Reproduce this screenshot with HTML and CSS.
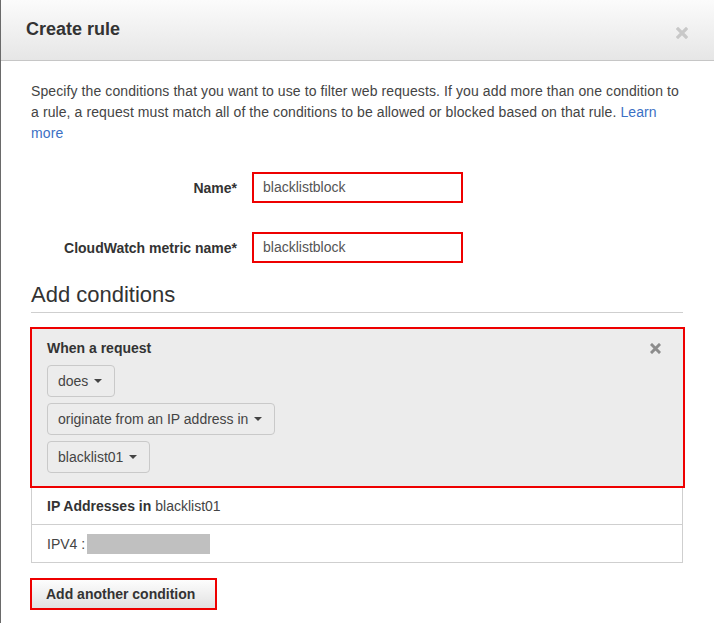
FILE: index.html
```html
<!DOCTYPE html>
<html lang="en">
<head>
<meta charset="utf-8">
<title>Create rule</title>
<link rel="stylesheet" href="styles.css">
</head>
<body>
<div class="modal">
  <div class="modal-header">
    <h1 class="modal-title">Create rule</h1>
    <span class="close-x">
      <svg width="12" height="12" viewBox="0 0 12 12"><path d="M2 2 L10 10 M10 2 L2 10" stroke="#c8c8c8" stroke-width="3.2" stroke-linecap="square"/></svg>
    </span>
  </div>
  <div class="modal-body">
    <p class="intro">Specify the conditions that you want to use to filter web requests. If you add more than one condition to a rule, a request must match all of the conditions to be allowed or blocked based on that rule. <a href="#" class="link">Learn more</a></p>

    <div class="form-row">
      <label class="form-label">Name*</label>
      <div class="field">blacklistblock</div>
    </div>
    <div class="form-row">
      <label class="form-label">CloudWatch metric name*</label>
      <div class="field">blacklistblock</div>
    </div>

    <h2 class="section-title">Add conditions</h2>

    <div class="condition">
      <div class="condition-head">
        <span class="condition-title">When a request</span>
        <span class="condition-close">
          <svg width="11" height="11" viewBox="0 0 11 11"><path d="M2 2 L9 9 M9 2 L2 9" stroke="#8c8c8c" stroke-width="3" stroke-linecap="square"/></svg>
        </span>
      </div>
      <div class="dd-list">
        <button class="dd">does <span class="caret"></span></button>
        <button class="dd">originate from an IP address in <span class="caret"></span></button>
        <button class="dd">blacklist01 <span class="caret"></span></button>
      </div>
    </div>

    <div class="ip-table">
      <div class="ip-row"><b>IP Addresses in</b> blacklist01</div>
      <div class="ip-row">IPV4 : <span class="redacted"></span></div>
    </div>

    <button class="add-btn">Add another condition</button>
  </div>
</div>
</body>
</html>
```

FILE: styles.css
```css
* { box-sizing: border-box; }
html, body { margin: 0; padding: 0; background: #fff; }
body {
  font-family: "Liberation Sans", Arial, sans-serif;
  font-size: 14px;
  color: #444;
  width: 714px;
  height: 623px;
  overflow: hidden;
}
.modal {
  border-left: 1px solid #6a6a6a;
  height: 623px;
}
.modal-header {
  height: 61px;
  border-bottom: 1px solid #c6c6c6;
  background: linear-gradient(to bottom, #fbfbfb 0%, #e6e6e6 100%);
  display: flex;
  align-items: center;
  justify-content: space-between;
  padding: 0 26px 0 25px;
}
.modal-title {
  margin: 0;
  font-size: 18px;
  font-weight: bold;
  color: #333;
  line-height: 20px;
  position: relative;
  top: -1px;
}
.close-x { display: flex; margin-top: 6px; }
.modal-body {
  padding: 20px 31px 0 30px;
}
.intro {
  margin: 0;
  line-height: 21px;
  color: #444;
  letter-spacing: 0.1px;
}
.link { color: #3b70c4; text-decoration: none; }
.form-row {
  display: grid;
  grid-template-columns: 206px 211px;
  column-gap: 15px;
  align-items: center;
  margin-top: 28px;
}
.form-row + .form-row { margin-top: 29px; }
.form-label {
  text-align: right;
  font-weight: bold;
  color: #333;
}
.field {
  height: 31px;
  border: 2px solid #ee0000;
  padding: 0 9px;
  line-height: 27px;
  color: #555;
}
.section-title {
  margin: 17px 0 0;
  font-size: 22px;
  font-weight: normal;
  color: #333;
  line-height: 30px;
  padding-bottom: 2px;
  border-bottom: 1px solid #cfcfcf;
}
.condition {
  margin: 14px -2px 0 -1px;
  border: 2px solid #ee0000;
  background: #ececec;
  padding: 9px 15px 13px 15px;
}
.condition-head {
  display: flex;
  justify-content: space-between;
  align-items: center;
  line-height: 20px;
}
.condition-title { font-weight: bold; color: #333; }
.condition-close { display: flex; margin-right: 7px; }
.dd-list {
  display: flex;
  flex-direction: column;
  align-items: flex-start;
  gap: 6px;
  margin-top: 7px;
}
.dd {
  font-family: inherit;
  font-size: 14px;
  color: #444;
  height: 32px;
  padding: 0 12px 0 10px;
  border: 1px solid #c9c9c9;
  border-radius: 4px;
  background: #ececec;
  display: flex;
  align-items: center;
  gap: 6px;
}
.caret {
  width: 0;
  height: 0;
  border-left: 4px solid transparent;
  border-right: 4px solid transparent;
  border-top: 4px solid #444;
}
.ip-table {
  border: 1px solid #cfcfcf;
  border-top: none;
}
.ip-row {
  padding: 8px 15px;
  line-height: 20px;
  color: #444;
  display: flex;
  align-items: center;
}
.ip-row b { color: #333; margin-right: 4px; }
.ip-row + .ip-row { border-top: 1px solid #cfcfcf; padding: 9px 15px 8px; }
.redacted {
  display: inline-block;
  width: 123px;
  height: 20px;
  background: #c0c0c0;
  margin-left: 2px;
}
.add-btn {
  display: block;
  margin: 15px 0 0 -1px;
  height: 32px;
  padding: 0 20px 0 14px;
  border: 2px solid #ee0000;
  background: linear-gradient(to bottom, #fdfdfd 0%, #e2e2e2 100%);
  font-family: inherit;
  font-size: 14px;
  font-weight: bold;
  color: #333;
}
```
